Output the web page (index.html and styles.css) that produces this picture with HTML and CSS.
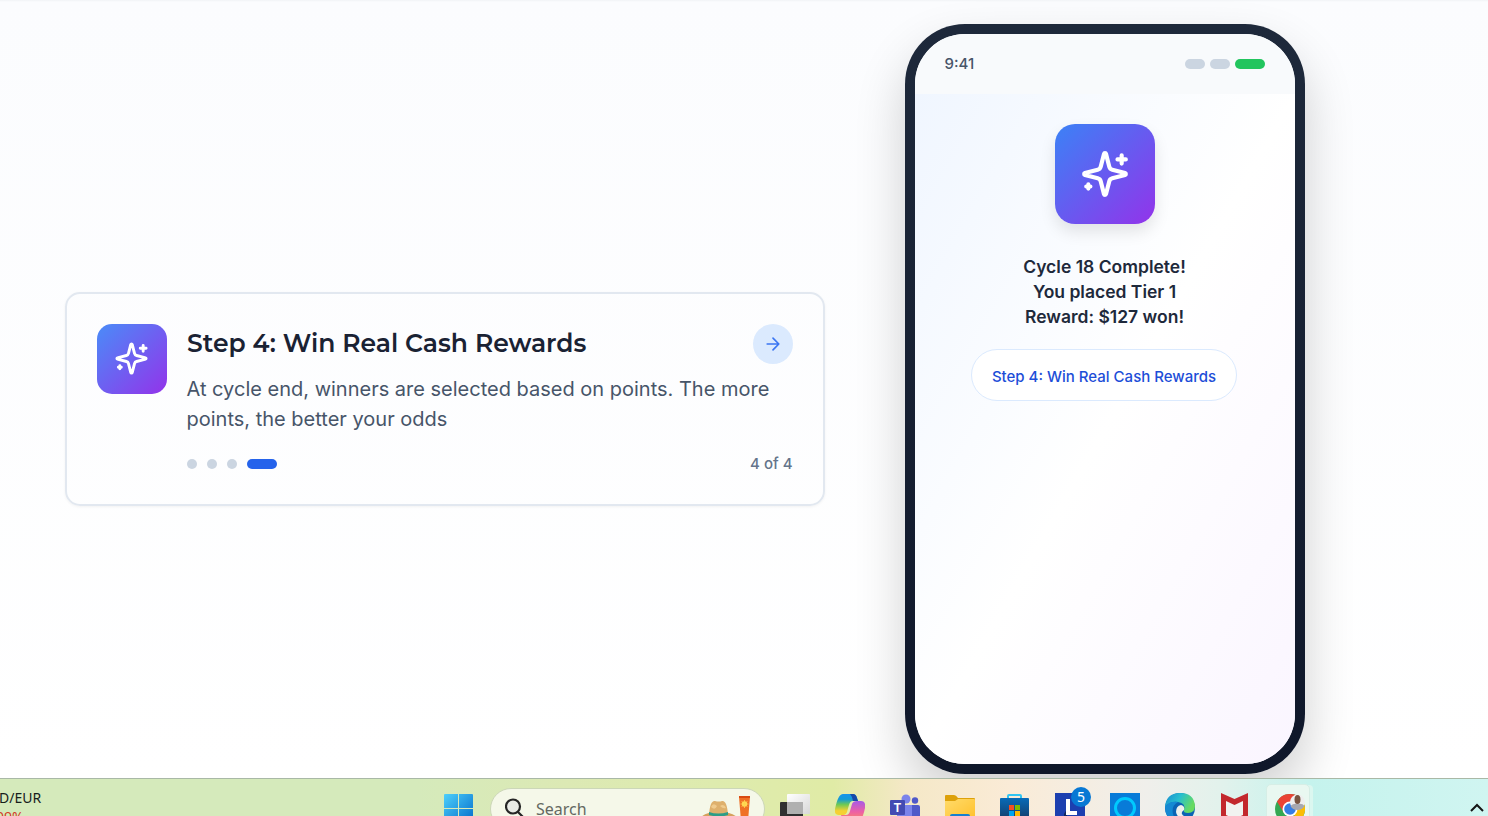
FILE: index.html
```html
<!DOCTYPE html>
<html lang="en">
<head>
<meta charset="utf-8">
<title>Win Real Cash Rewards</title>
<link rel="stylesheet" href="styles.css">
</head>
<body>
<svg class="defs" aria-hidden="true">
  <symbol id="sparkles" viewBox="0 0 24 24">
    <g fill="none" stroke="currentColor" stroke-width="2" stroke-linecap="round" stroke-linejoin="round">
      <path d="M9.937 15.5A2 2 0 0 0 8.5 14.063l-6.135-1.582a.5.5 0 0 1 0-.962L8.5 9.936A2 2 0 0 0 9.937 8.5l1.582-6.135a.5.5 0 0 1 .963 0L14.063 8.5A2 2 0 0 0 15.5 9.937l6.135 1.581a.5.5 0 0 1 0 .964L15.5 14.063a2 2 0 0 0-1.437 1.437l-1.582 6.135a.5.5 0 0 1-.963 0z"/>
      <path d="M20 3v4M22 5h-4M4 17v2M5 18H3"/>
    </g>
  </symbol>
</svg>
<main class="page">
  <section class="card">
    <div class="tile tile-small"><svg width="35" height="35"><use href="#sparkles"/></svg></div>
    <div class="card-body">
      <div class="card-head">
        <h2 class="title">Step 4: Win Real Cash Rewards</h2>
        <div class="arrow"><svg width="20" height="20" viewBox="0 0 24 24" fill="none" stroke="currentColor" stroke-width="2" stroke-linecap="round" stroke-linejoin="round"><path d="M5 12h14M12 5l7 7-7 7"/></svg></div>
      </div>
      <p class="desc">At cycle end, winners are selected based on points. The more points, the better your odds</p>
      <div class="progress">
        <div class="dots"><i class="dot"></i><i class="dot"></i><i class="dot"></i><i class="dot active"></i></div>
        <span class="count">4 of 4</span>
      </div>
    </div>
  </section>
  <section class="phone">
    <div class="screen">
      <div class="status"><span class="time">9:41</span><div class="bars"><i class="bar"></i><i class="bar"></i><i class="bar green"></i></div></div>
      <div class="content">
        <div class="tile tile-large"><svg width="50" height="50"><use href="#sparkles"/></svg></div>
        <p class="message">Cycle 18 Complete!<br>You placed Tier 1<br>Reward: $127 won!</p>
        <div class="pill">Step 4: Win Real Cash Rewards</div>
      </div>
    </div>
  </section>
</main>
<footer class="taskbar">
  <div class="widget"><span>D/EUR</span><span class="loss">09%</span></div>
  <div class="start"><svg width="30" height="30" viewBox="0 0 30 30"><defs><linearGradient id="win" x1="0" y1="0" x2="30" y2="30" gradientUnits="userSpaceOnUse"><stop stop-color="#4dd0fb"/><stop offset="1" stop-color="#0067c8"/></linearGradient></defs><path fill="url(#win)" d="M1 0h13v14H0V1q0-1 1-1zM15 0h13q1 0 1 1v13H15zM0 15h14v14H0zM15 15h14v14H15z"/></svg></div>
  <div class="search">
    <svg width="22" height="24" viewBox="0 0 22 24" fill="none" stroke="#262626" stroke-width="2.2"><circle cx="8" cy="8.500" r="7" fill="#e9ebe6"/><path d="m13 14 5 5" stroke-linecap="round"/></svg>
    <span>Search</span>
    <svg class="beach" width="56" height="26" viewBox="0 0 56 26"><path fill="#d5a15d" d="M2 24q3-7 19-7t20 8H2z"/><path fill="#deb06c" d="M11 20Q12 5 17 6q4 1 7 0 5-1 6 14z"/><path fill="#f0cb8d" d="M13 12q2-5 6-1-2 5-6 1zM22 11q4-3 6 2-3 1-6-2z"/><path fill="#2c9d88" d="M11 17q9 3 19 0v3q-9 3-19 0z"/><path fill="#ef7126" d="M41 2h11l-2 24h-7z"/><path fill="#d94b13" d="M41 1h11v2H41z"/><circle cx="46.500" cy="9" r="2.700" fill="#ffe05b"/><path stroke="#ffd24d" stroke-width=".8" d="M46.500 5v8M42.500 9h8M43.700 6.200l5.600 5.600M49.300 6.200l-5.600 5.600"/></svg>
  </div>
  <div class="apps">
    <div class="app"><svg width="30" height="30" viewBox="0 0 30 30"><defs><linearGradient id="view" x1="0" y1="0" x2="1" y2="1"><stop stop-color="#fff"/><stop offset="1" stop-color="#d8d8d8"/></linearGradient></defs><rect y="9" width="23" height="21" rx="1" fill="#303030"/><rect x="7" y="1" width="23" height="20" rx="1" fill="url(#view)"/><path fill="#b0b0b0" d="M7 9h16v12H7z"/></svg></div>
    <div class="app"><svg width="30" height="30" viewBox="0 0 30 30"><defs><linearGradient id="co1" x1="0" y1="0" x2="0" y2="1"><stop stop-color="#1794ed"/><stop offset=".25" stop-color="#139bd6"/><stop offset=".5" stop-color="#6dc955"/><stop offset=".8" stop-color="#f5d132"/></linearGradient><linearGradient id="co2" x1="0" y1="0" x2="0" y2="1"><stop stop-color="#a75be7"/><stop offset=".5" stop-color="#ee60a4"/><stop offset="1" stop-color="#ff9a50"/></linearGradient></defs><path fill="url(#co1)" d="M8 1h10q3 0 4 4l1 3h-5q-3 0-4 4l-2 7q-1 3-4 3H4q-5 0-4-6Q3 1 8 1z"/><path fill="#1648a8" d="M15 1h3q3 0 4 4l1 3h-5q-1-5-3-7z"/><path fill="url(#co2)" d="M22 8h4q5 0 4 7-3 15-9 15H11q-3 0-4-5l-1-3h5q3 0 4-4l2-7q1-3 5-3z"/></svg></div>
    <div class="app"><svg width="30" height="30" viewBox="0 0 30 30"><circle cx="16" cy="6" r="4.500" fill="#7b83eb"/><circle cx="25" cy="7.500" r="3.200" fill="#5059c9"/><path fill="#5059c9" d="M19 12h9q2 0 2 2v9q0 5-7 5z"/><path fill="#7b83eb" d="M10 12h12v10q0 8-8 8-7-1-7-8V12z"/><rect y="7" width="15" height="15" rx="1" fill="#444bb3"/><text class="teams-t" x="7.500" y="19" text-anchor="middle">T</text></svg></div>
    <div class="app"><svg width="30" height="30" viewBox="0 0 30 30"><defs><linearGradient id="folder" x1="0" y1="0" x2="1" y2="1"><stop stop-color="#ffdb6a"/><stop offset="1" stop-color="#ffc02b"/></linearGradient></defs><path fill="#dda10a" d="M0 3q0-1 1-1h8q2 0 4 3h16q1 0 1 1v5H0z"/><path fill="url(#folder)" d="M0 8h10l3-2h16q1 0 1 1v20H0z"/><path fill="#1680ce" d="M5 23q0-2 2-2h16q2 0 2 2v5H5z"/></svg></div>
    <div class="app"><svg width="30" height="30" viewBox="0 0 30 30"><defs><linearGradient id="store" x1="0" y1="0" x2="0" y2="1"><stop stop-color="#086bb8"/><stop offset="1" stop-color="#16345d"/></linearGradient></defs><path fill="none" stroke="#31c5f2" stroke-width="2" d="M8 7V3q0-1 1-1h11q1 0 1 1v4"/><path fill="url(#store)" d="M1 5h27q1 0 1 1v20q0 4-4 4H4q-4 0-4-4V6q0-1 1-1z"/><path fill="#f25022" d="M9 12h5v5H9z"/><path fill="#7fba00" d="M15 12h5v5h-5z"/><path fill="#00a4ef" d="M9 18h5v5H9z"/><path fill="#ffb900" d="M15 18h5v5h-5z"/></svg></div>
    <div class="app badge-wrap"><svg width="30" height="30" viewBox="0 0 30 30"><path fill="#1c3fb0" d="M0 0h30v30H0z"/><path fill="#10265f" d="M9 30v-9l3-5v14z"/><path fill="#fff" d="M11 6h4v12h7v4H11z"/></svg><span class="badge">5</span></div>
    <div class="app"><svg width="30" height="30" viewBox="0 0 30 30"><path fill="#087bd8" d="M0 0h30v30H0z"/><circle cx="15" cy="15" r="9.500" fill="none" stroke="#00cafe" stroke-width="3"/></svg></div>
    <div class="app"><svg width="30" height="30" viewBox="0 0 30 30"><defs><linearGradient id="edge" x1="0" y1="0" x2="1" y2=".4"><stop stop-color="#178bd1"/><stop offset=".5" stop-color="#27bfcf"/><stop offset="1" stop-color="#68db60"/></linearGradient></defs><circle cx="15" cy="15" r="15" fill="#0b63b4"/><path fill="url(#edge)" d="M0 14Q1 0 15 0q14 0 15 13 0 7-7 7-5 0-4-3 2-7-6-8Q5 8 0 14z"/><path fill="#1489d3" d="M0 14q4-6 13-5-7 4-5 12 2 6 7 9Q0 28 0 14z"/><path fill="#eef0ec" d="M19 17q1-4-3-5-5 1-5 7 1 6 8 7 6 1 8-3-8 2-10-2-1-2 2-4z"/></svg></div>
    <div class="app"><svg width="30" height="30" viewBox="0 0 30 30"><path fill="#c3282d" d="m1 0 13.500 6L28 0v25l-13.500 6L1 25z"/><path fill="#f1f3f0" d="m6 8 8.500 4L23 8v14l-8.500 4L6 22z"/></svg></div>
    <div class="app current"><svg width="30" height="30" viewBox="0 0 30 30"><circle cx="15" cy="15" r="15" fill="#34a853"/><path fill="#ea4335" d="M2 7.500A15 15 0 0 1 28 7.500H15L9 19z"/><path fill="#fbbc05" d="M15 7.500h13A15 15 0 0 1 15 30l6-12z"/><circle cx="15" cy="15" r="7.500" fill="#fff"/><circle cx="15" cy="15" r="5.800" fill="#347de5"/><circle cx="22.500" cy="8" r="7.500" fill="#eee"/><path fill="#a7a8b0" d="M15.500 12q3-3 7-2 5-1 7 2-2 4-7 4t-7-4z"/><ellipse cx="22.500" cy="5.500" rx="3" ry="4.500" fill="#795441"/></svg></div>
  </div>
  <div class="tray"><svg width="16" height="10" viewBox="0 0 16 10" fill="none" stroke="#151515" stroke-width="2"><path d="m2 8 6-6 6 6"/></svg></div>
</footer>
</body>
</html>
```
FILE: styles.css
```css
* { box-sizing: border-box; }
body { margin: 0; width: 1488px; height: 816px; overflow: hidden; font-family: Inter, "Liberation Sans", sans-serif; background: #fff; }
.defs { position: absolute; width: 0; height: 0; }
svg { display: block; flex: none; }
.page { height: 778px; display: flex; align-items: center; gap: 80px; padding: 20px 0 0 65px; background: linear-gradient(#f1f3f6, #fbfcfe 2px, #fff); overflow: hidden; }
.card { width: 760px; height: 214px; flex: none; display: flex; gap: 20px; padding: 30px; border: 2px solid #e2e8f0; border-radius: 15px; box-shadow: 0 1px 3px #0000000d; }
.tile { display: flex; align-items: center; justify-content: center; flex: none; color: #fff; background: linear-gradient(135deg, #3b82f6, #9333ea); }
.tile-small { width: 70px; height: 70px; padding: 0 1px 1px 0; border-radius: 15px; background: linear-gradient(135deg, #4a8cf8, #9333ea); }
.card-body { flex: 1; }
.card-head { display: flex; height: 40px; align-items: center; justify-content: space-between; }
.title { margin: 0 0 2px; font: 600 25px/38px Montserrat, Inter, sans-serif; color: #1a2233; white-space: nowrap; }
.arrow { width: 40px; height: 40px; display: flex; align-items: center; justify-content: center; border-radius: 50%; background: #dbeafe; color: #3b76f2; }
.desc { margin: 10px 0 20px -.5px; font-size: 20px; line-height: 30px; color: #475569; }
.progress { height: 20px; display: flex; align-items: center; justify-content: space-between; }
.dots { display: flex; gap: 10px; }
.dot { width: 10px; height: 10px; border-radius: 5px; background: #cbd5e1; }
.active { width: 30px; background: #2563eb; }
.count { margin-right: .5px; font-size: 15px; line-height: 20px; font-weight: 500; color: #64748b; }
.phone { width: 400px; height: 750px; flex: none; padding: 10px; border-radius: 60px; background: linear-gradient(#1e293b, #0f172a); box-shadow: 0 25px 50px #00000030; }
.screen { height: 730px; border-radius: 50px; overflow: hidden; background: #fff; }
.status { height: 60px; display: flex; align-items: center; justify-content: space-between; padding: 0 30px 0 29.500px; background: #f8fafc; color: #475569; font-size: 15px; font-weight: 500; }
.time { padding-bottom: 2px; }
.bars { display: flex; gap: 5px; }
.bar { width: 20px; height: 10px; border-radius: 5px; background: #cbd5e1; }
.green { width: 30px; background: #22c55e; }
.content { height: 670px; display: flex; flex-direction: column; align-items: center; padding-top: 30px; background: linear-gradient(to bottom right, #f0f6ff, #fff 50%, #faf5ff); }
.tile-large { width: 100px; height: 100px; border-radius: 20px; box-shadow: 0 8px 16px #0000001a; }
.message { margin: 30px 1px 20px 0; text-align: center; font-size: 17.500px; line-height: 25px; font-weight: 600; color: #1e293b; }
.pill { width: 266px; height: 52px; display: flex; align-items: center; justify-content: center; padding-top: 2px; margin-right: 2px; border: 1px solid #dbeafe; border-radius: 26px; background: #fff; color: #1d4ed8; font-size: 15px; font-weight: 500; }
.taskbar { height: 38px; display: flex; align-items: flex-start; overflow: hidden; position: relative; border-top: 1px solid #a9b8a6; background: linear-gradient(90deg, #d5eabb 0 28%, #dce9b4 38%, #deebae 48%, #e0eba6 56%, #f5e8c7 61%, #faebd7 68%, #f0efeb 77%, #e2f2ec 82%, #c5f3ed 88%, #d0f5f1); }
.widget { width: 443px; padding-top: 9px; display: flex; flex-direction: column; font: 14px/19px "Noto Sans", sans-serif; color: #17201b; flex: none; }
.widget span { transform: translateX(-1px); }
.widget .loss { color: #d33a25; transform: translateX(-4px); }
.start { width: 47px; padding: 15px 0 0 1px; flex: none; }
.search { width: 275px; height: 42px; flex: none; margin-top: 9px; display: flex; align-items: flex-start; padding: 9px 0 0 14px; border: 1px solid #ccd7b8; border-radius: 21px; background: #f5f8e9; color: #646861; font: 16px/22px "Noto Sans", sans-serif; }
.search span { padding-left: 9px; }
.beach { margin: -3px 10px 0 auto; }
.apps { display: flex; margin-left: 2px; flex: none; }
.app { width: 55px; height: 50px; display: flex; justify-content: center; padding-top: 14px; }
.teams-t { font: bold 12px "Liberation Sans", sans-serif; fill: #fff; }
.badge-wrap { position: relative; }
.badge { position: absolute; top: 8px; left: 29px; width: 20px; height: 20px; border-radius: 50%; background: #0878d4; color: #fff; text-align: center; font: 14px/20px "Noto Sans", sans-serif; }
.current { width: 44px; margin: 5px 0 0 4px; padding: 9px 0 0 3px; border: 1px solid #d6eee6; border-radius: 5px; background: #e9f8f1; box-shadow: 4px 0 0 -1px #dbf7f0; }
.tray { margin-left: auto; padding: 24px 3px 0 0; }
```
